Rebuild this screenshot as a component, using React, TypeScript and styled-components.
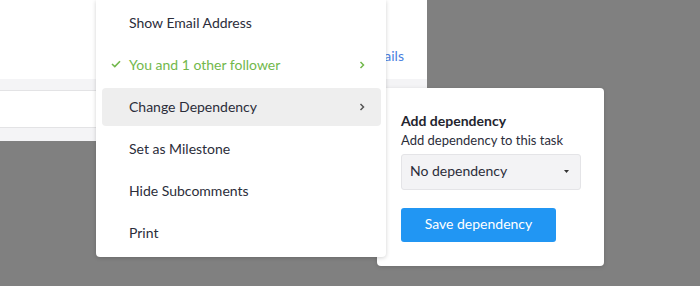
import React from "react";
import styled, { createGlobalStyle } from "styled-components";

const Global = createGlobalStyle`
  html, body { margin: 0; padding: 0; }
  body {
    background: #808080;
    font-family: "Lato", "Liberation Sans", sans-serif;
    -webkit-font-smoothing: antialiased;
  }
`;

const Stage = styled.div`
  position: relative;
  width: 700px;
  height: 286px;
  overflow: hidden;
  background: #808080;
`;

const BackPanel = styled.div`
  width: 427px;
  height: 141px;
  background: #fff;
  display: flex;
  flex-direction: column;
`;

const BackTop = styled.div`
  height: 79px;
  display: flex;
  justify-content: flex-end;
  align-items: flex-start;
  padding: 47px 23px 0 0;
  box-sizing: border-box;
`;

const Link = styled.a`
  color: #4a7fe0;
  font-size: 14px;
  line-height: 18px;
`;

const Band = styled.div<{ $h: number }>`
  height: ${(p) => p.$h}px;
  background: #f4f4f6;
  border-bottom: ${(p) => (p.$h === 11 ? "1px solid #e3e3e5" : "none")};
`;

const WhiteRow = styled.div`
  height: 36px;
  background: #fff;
  border-bottom: 1px solid #e3e3e5;
`;

const Menu = styled.div`
  position: absolute;
  left: 96px;
  top: 0;
  width: 290px;
  background: #fff;
  border-radius: 0 0 4px 4px;
  box-shadow: 0 1px 4px rgba(0, 0, 0, 0.18);
  padding: 2px 0 3px;
  z-index: 2;
  display: flex;
  flex-direction: column;
`;

const Item = styled.div<{ $active?: boolean; $green?: boolean }>`
  position: relative;
  height: 38px;
  box-sizing: border-box;
  margin: 2px 5px 2px 6px;
  border-radius: 4px;
  background: ${(p) => (p.$active ? "#eeeeee" : "transparent")};
  display: flex;
  align-items: center;
  padding: 0 16px 2px 27px;
  font-size: 14px;
  color: ${(p) => (p.$green ? "#72b84c" : "#2b2d3a")};
`;

const Label = styled.span`
  flex: 1;
`;

const Check = styled.svg`
  position: absolute;
  left: 9px;
  top: 14px;
`;

const Chevron = styled.svg`
  display: block;
  margin-top: 1px;
`;

const DepPanel = styled.div`
  position: absolute;
  left: 377px;
  top: 88px;
  width: 227px;
  height: 178px;
  box-sizing: border-box;
  background: #fff;
  border-radius: 4px;
  box-shadow: 0 1px 4px rgba(0, 0, 0, 0.15);
  padding: 23px 23px 0 24px;
  display: flex;
  flex-direction: column;
  z-index: 1;
`;

const Title = styled.div`
  font-weight: 700;
  font-size: 14px;
  line-height: 20px;
  color: #23242e;
`;

const Sub = styled.div`
  font-size: 13px;
  line-height: 18px;
  color: #2b2d3a;
`;

const Select = styled.div`
  margin-top: 5px;
  width: 180px;
  height: 36px;
  box-sizing: border-box;
  background: #f3f3f5;
  border: 1px solid #e4e4e7;
  border-radius: 3px;
  display: flex;
  align-items: center;
  justify-content: space-between;
  padding: 0 11px 3px 8px;
  font-size: 14px;
  color: #2b2d3a;
`;

const Caret = styled.svg`
  display: block;
  margin-top: 2px;
`;

const Button = styled.button`
  margin-top: 18px;
  width: 155px;
  height: 34px;
  border: none;
  border-radius: 3px;
  background: #2196f3;
  color: #fff;
  font-family: inherit;
  font-size: 14px;
  padding: 0 0 3px;
`;

const ChevronIcon = ({ color }: { color: string }) => (
  <Chevron width="6" height="8" viewBox="0 0 6 8">
    <path d="M1.5 1 L4.5 4 L1.5 7" stroke={color} strokeWidth="1.5" fill="none" />
  </Chevron>
);

export default function App() {
  return (
    <>
      <Global />
      <Stage>
        <BackPanel>
          <BackTop>
            <Link>Details</Link>
          </BackTop>
          <Band $h={11} />
          <WhiteRow />
          <Band $h={13} />
        </BackPanel>

        <Menu>
          <Item>
            <Label>Show Email Address</Label>
          </Item>
          <Item $green>
            <Check width="10" height="8" viewBox="0 0 10 8">
              <path d="M1 4 L3.8 6.6 L9 1.2" stroke="#72b84c" strokeWidth="1.6" fill="none" />
            </Check>
            <Label>You and 1 other follower</Label>
            <ChevronIcon color="#72b84c" />
          </Item>
          <Item $active>
            <Label>Change Dependency</Label>
            <ChevronIcon color="#555" />
          </Item>
          <Item>
            <Label>Set as Milestone</Label>
          </Item>
          <Item>
            <Label>Hide Subcomments</Label>
          </Item>
          <Item>
            <Label>Print</Label>
          </Item>
        </Menu>

        <DepPanel>
          <Title>Add dependency</Title>
          <Sub>Add dependency to this task</Sub>
          <Select>
            <span>No dependency</span>
            <Caret width="5" height="3" viewBox="0 0 5 3">
              <path d="M0 0 L5 0 L2.5 3 Z" fill="#333" />
            </Caret>
          </Select>
          <Button>Save dependency</Button>
        </DepPanel>
      </Stage>
    </>
  );
}
